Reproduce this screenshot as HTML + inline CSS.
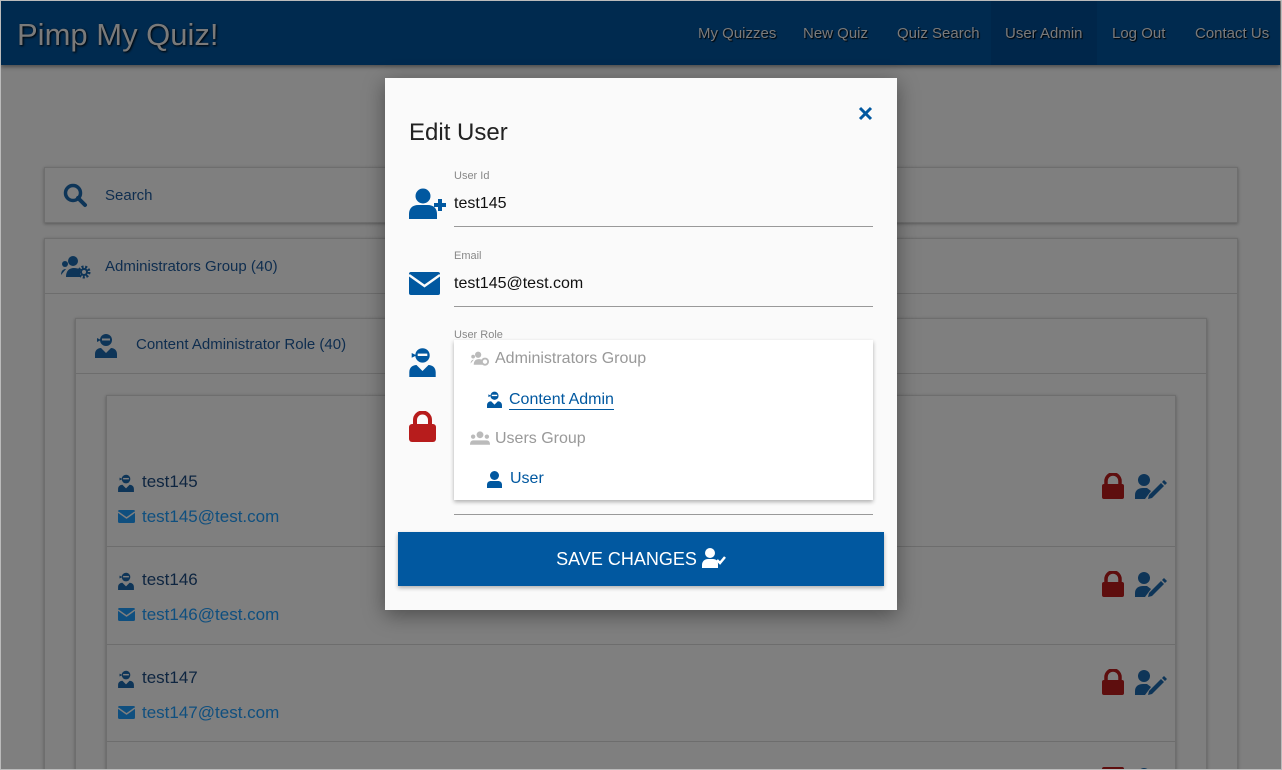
<!DOCTYPE html>
<html><head><meta charset="utf-8"><style>
*{box-sizing:border-box;margin:0;padding:0}
html,body{width:1282px;height:770px;overflow:hidden}
body{background:#7f7f7f;font-family:"Liberation Sans",sans-serif}
#w{position:absolute;left:0;top:0;width:1282px;height:770px;overflow:hidden;background:#7f7f7f}
#fr{position:absolute;left:0;top:0;width:1282px;height:770px;border:1px solid #bbb;pointer-events:none}
.hdr{position:absolute;left:1px;top:1px;width:1279px;height:64px;background:#002a4f;box-shadow:0 2px 4px rgba(0,0,0,.4)}
.logo{position:absolute;left:16px;top:16px;font-size:31px;color:#7a7a7a;text-shadow:1px 1px 2px #000}
.nav{position:absolute;top:24px;font-size:15px;color:#7a7a7a;text-shadow:1px 1px 1px #000}
.card{position:absolute;border:1px solid #6e6e6e;box-shadow:0 1px 3px rgba(0,0,0,.3);background:#7f7f7f}
.t{position:absolute;font-size:15px;color:#0e2d4f}
.sep{position:absolute;left:107px;width:1068px;height:1px;background:#6d6d6d}
.row{position:absolute;font-size:17px}
.modal{position:absolute;left:385px;top:78px;width:512px;height:532px;background:#fafafa;box-shadow:0 5px 20px rgba(0,0,0,.4)}
.m{position:absolute}
.lbl{font-size:11px;color:#888}
.line{height:1px;background:#999;width:419px;left:69px}
.dd{position:absolute;left:69px;top:262px;width:419px;height:160px;background:#fff;box-shadow:0 2px 4px rgba(0,0,0,.3);font-size:16px}
.btn{position:absolute;left:13px;top:454px;width:486px;height:54px;background:#0158a0;color:#fff;font-size:18px;text-align:center;line-height:54px;box-shadow:0 2px 4px rgba(0,0,0,.3)}
</style></head><body><div id="w">
<div class="hdr">
<div class="logo">Pimp My Quiz!</div>
<div style="position:absolute;left:990px;top:0;width:106px;height:64px;background:#00264a"></div>
<div class="nav" style="left:697px">My Quizzes</div>
<div class="nav" style="left:802px">New Quiz</div>
<div class="nav" style="left:896px">Quiz Search</div>
<div class="nav" style="left:1004px">User Admin</div>
<div class="nav" style="left:1111px">Log Out</div>
<div class="nav" style="left:1194px">Contact Us</div>
</div>

<div class="card" style="left:44px;top:167px;width:1194px;height:56px"></div>
<svg style="position:absolute;left:63px;top:183px" width="26" height="26" viewBox="0 0 26 26"><circle cx="10" cy="10" r="7.5" fill="none" stroke="#0e3558" stroke-width="3.5"/><path d="M15 15l7 7" stroke="#0e3558" stroke-width="4" stroke-linecap="round"/></svg>
<div class="t" style="left:105px;top:187px">Search</div>

<div class="card" style="left:44px;top:238px;width:1194px;height:540px"></div>
<div style="position:absolute;left:45px;top:293px;width:1192px;height:1px;background:#6d6d6d"></div>
<svg style="position:absolute;left:60px;top:255px" width="32" height="24" viewBox="0 0 32 24"><circle cx="5" cy="9" r="3" fill="#0e3558"/><circle cx="13" cy="6" r="5" fill="#0e3558"/><path d="M1 20c0-5 3-6 5-6M6 22c0-6 3-9 8-9s6 2 6 2v7z" fill="#0e3558"/><circle cx="24" cy="17" r="5" fill="none" stroke="#0e3558" stroke-width="3" stroke-dasharray="2 1.5"/><circle cx="24" cy="17" r="3" fill="none" stroke="#0e3558" stroke-width="2"/></svg>
<div class="t" style="left:105px;top:258px">Administrators Group (40)</div>

<div class="card" style="left:75px;top:318px;width:1132px;height:460px"></div>
<div style="position:absolute;left:76px;top:373px;width:1130px;height:1px;background:#6d6d6d"></div>
<svg style="position:absolute;left:95px;top:333px" width="22" height="25" viewBox="0 0 22 25"><circle cx="11" cy="7" r="6" fill="#0e3558"/><rect x="7" y="5.5" width="8" height="2" fill="#7f7f7f"/><path d="M2 5l4 2-4 2z" fill="#0e3558"/><path d="M0 25v-4c0-4 3-6 6-6l5 5 5-5c3 0 6 2 6 6v4z" fill="#0e3558"/></svg>
<div class="t" style="left:136px;top:336px">Content Administrator Role (40)</div>

<div class="card" style="left:106px;top:395px;width:1070px;height:383px"></div>
<div class="sep" style="top:546px"></div><div class="sep" style="top:644px"></div><div class="sep" style="top:741px"></div>

<svg style="position:absolute;left:118px;top:474px" width="16" height="18" viewBox="0 0 22 25"><circle cx="11" cy="7" r="6" fill="#0e3558"/><rect x="7" y="5.5" width="8" height="2" fill="#7f7f7f"/><path d="M2 5l4 2-4 2z" fill="#0e3558"/><path d="M0 25v-4c0-4 3-6 6-6l5 5 5-5c3 0 6 2 6 6v4z" fill="#0e3558"/></svg>
<div class="row" style="left:142px;top:472px;color:#0e2540">test145</div>
<svg style="position:absolute;left:118px;top:510px" width="17" height="13" viewBox="0 0 17 13"><rect width="17" height="13" rx="1.5" fill="#0f4f7f"/><path d="M0 2l8.5 6 8.5-6" fill="none" stroke="#7f7f7f" stroke-width="1.5"/></svg>
<div class="row" style="left:142px;top:507px;color:#0f4f7f">test145@test.com</div>

<svg style="position:absolute;left:118px;top:572px" width="16" height="18" viewBox="0 0 22 25"><circle cx="11" cy="7" r="6" fill="#0e3558"/><rect x="7" y="5.5" width="8" height="2" fill="#7f7f7f"/><path d="M2 5l4 2-4 2z" fill="#0e3558"/><path d="M0 25v-4c0-4 3-6 6-6l5 5 5-5c3 0 6 2 6 6v4z" fill="#0e3558"/></svg>
<div class="row" style="left:142px;top:570px;color:#0e2540">test146</div>
<svg style="position:absolute;left:118px;top:608px" width="17" height="13" viewBox="0 0 17 13"><rect width="17" height="13" rx="1.5" fill="#0f4f7f"/><path d="M0 2l8.5 6 8.5-6" fill="none" stroke="#7f7f7f" stroke-width="1.5"/></svg>
<div class="row" style="left:142px;top:605px;color:#0f4f7f">test146@test.com</div>

<svg style="position:absolute;left:118px;top:670px" width="16" height="18" viewBox="0 0 22 25"><circle cx="11" cy="7" r="6" fill="#0e3558"/><rect x="7" y="5.5" width="8" height="2" fill="#7f7f7f"/><path d="M2 5l4 2-4 2z" fill="#0e3558"/><path d="M0 25v-4c0-4 3-6 6-6l5 5 5-5c3 0 6 2 6 6v4z" fill="#0e3558"/></svg>
<div class="row" style="left:142px;top:668px;color:#0e2540">test147</div>
<svg style="position:absolute;left:118px;top:706px" width="17" height="13" viewBox="0 0 17 13"><rect width="17" height="13" rx="1.5" fill="#0f4f7f"/><path d="M0 2l8.5 6 8.5-6" fill="none" stroke="#7f7f7f" stroke-width="1.5"/></svg>
<div class="row" style="left:142px;top:703px;color:#0f4f7f">test147@test.com</div>

<svg style="position:absolute;left:1101px;top:473px" width="68" height="27" viewBox="0 0 68 27"><path d="M5 12V8a7 7 0 0 1 14 0v4" fill="none" stroke="#5e0e0e" stroke-width="3.5"/><rect x="1" y="11" width="22" height="15" rx="2" fill="#5e0e0e"/><circle cx="43" cy="7" r="6" fill="#0e3558"/><path d="M34 26v-4c0-5 4-7 8-7h4l4 3-6 8z" fill="#0e3558"/><path d="M47 26l1-4 12-12 3 3-12 12z" fill="#0e3558"/><path d="M61 9l2-2 3 3-2 2z" fill="#0e3558"/></svg>
<svg style="position:absolute;left:1101px;top:571px" width="68" height="27" viewBox="0 0 68 27"><path d="M5 12V8a7 7 0 0 1 14 0v4" fill="none" stroke="#5e0e0e" stroke-width="3.5"/><rect x="1" y="11" width="22" height="15" rx="2" fill="#5e0e0e"/><circle cx="43" cy="7" r="6" fill="#0e3558"/><path d="M34 26v-4c0-5 4-7 8-7h4l4 3-6 8z" fill="#0e3558"/><path d="M47 26l1-4 12-12 3 3-12 12z" fill="#0e3558"/><path d="M61 9l2-2 3 3-2 2z" fill="#0e3558"/></svg>
<svg style="position:absolute;left:1101px;top:669px" width="68" height="27" viewBox="0 0 68 27"><path d="M5 12V8a7 7 0 0 1 14 0v4" fill="none" stroke="#5e0e0e" stroke-width="3.5"/><rect x="1" y="11" width="22" height="15" rx="2" fill="#5e0e0e"/><circle cx="43" cy="7" r="6" fill="#0e3558"/><path d="M34 26v-4c0-5 4-7 8-7h4l4 3-6 8z" fill="#0e3558"/><path d="M47 26l1-4 12-12 3 3-12 12z" fill="#0e3558"/><path d="M61 9l2-2 3 3-2 2z" fill="#0e3558"/></svg>
<svg style="position:absolute;left:1101px;top:767px" width="68" height="27" viewBox="0 0 68 27"><rect x="1" y="0" width="22" height="15" rx="2" fill="#5e0e0e"/><circle cx="43" cy="7" r="6" fill="#0e3558"/></svg>

<div class="modal">
<div class="m" style="left:24px;top:41px;font-size:24px;color:#222">Edit User</div>
<svg class="m" style="left:473px;top:28px" width="15" height="15" viewBox="0 0 15 15"><path d="M2 2l11 11M13 2L2 13" stroke="#0158a0" stroke-width="3"/></svg>

<div class="m lbl" style="left:69px;top:92px">User Id</div>
<svg class="m" style="left:24px;top:110px" width="38" height="31" viewBox="0 0 38 31"><circle cx="14" cy="8" r="7.5" fill="#0158a0"/><path d="M0 31v-5c0-6 4-9 9-9h10c5 0 9 3 9 9v5z" fill="#0158a0"/><path d="M31 11v12M25 17h12" stroke="#0158a0" stroke-width="4"/></svg>
<div class="m" style="left:69px;top:117px;font-size:16px;color:#111">test145</div>
<div class="m line" style="top:148px"></div>

<div class="m lbl" style="left:69px;top:172px">Email</div>
<svg class="m" style="left:24px;top:194px" width="31" height="23" viewBox="0 0 31 23"><rect width="31" height="23" rx="2" fill="#0158a0"/><path d="M0 3l15.5 11L31 3" fill="none" stroke="#fafafa" stroke-width="2.5"/></svg>
<div class="m" style="left:69px;top:197px;font-size:16px;color:#111">test145@test.com</div>
<div class="m line" style="top:228px"></div>

<div class="m lbl" style="left:69px;top:251px">User Role</div>
<svg class="m" style="left:24px;top:269px" width="27" height="30" viewBox="0 0 22 25"><circle cx="11" cy="7" r="6" fill="#0158a0"/><rect x="7" y="5.5" width="8" height="2" fill="#fafafa"/><path d="M2 5l4 2-4 2z" fill="#0158a0"/><path d="M0 25v-4c0-4 3-6 6-6l5 5 5-5c3 0 6 2 6 6v4z" fill="#0158a0"/></svg>
<svg class="m" style="left:24px;top:333px" width="27" height="31" viewBox="0 0 27 31"><path d="M6 14V9a7.5 7.5 0 0 1 15 0v5" fill="none" stroke="#b71c1c" stroke-width="4"/><rect x="0" y="13" width="27" height="18" rx="3" fill="#b71c1c"/></svg>
<div class="m line" style="top:436px"></div>

<div class="dd">
<svg style="position:absolute;left:16px;top:11px" width="20" height="15" viewBox="0 0 32 24"><circle cx="5" cy="9" r="3" fill="#bbb"/><circle cx="13" cy="6" r="5" fill="#bbb"/><path d="M1 20c0-5 3-6 5-6M6 22c0-6 3-9 8-9s6 2 6 2v7z" fill="#bbb"/><circle cx="24" cy="17" r="5" fill="none" stroke="#bbb" stroke-width="3"/></svg>
<div style="position:absolute;left:41px;top:10px;color:#999">Administrators Group</div>
<svg style="position:absolute;left:33px;top:51px" width="15" height="17" viewBox="0 0 22 25"><circle cx="11" cy="7" r="6" fill="#0158a0"/><rect x="7" y="5.5" width="8" height="2" fill="#fff"/><path d="M2 5l4 2-4 2z" fill="#0158a0"/><path d="M0 25v-4c0-4 3-6 6-6l5 5 5-5c3 0 6 2 6 6v4z" fill="#0158a0"/></svg>
<div style="position:absolute;left:55px;top:50px;color:#0158a0;border-bottom:1px solid #0158a0;line-height:19px">Content Admin</div>
<svg style="position:absolute;left:16px;top:91px" width="20" height="15" viewBox="0 0 32 24"><circle cx="5" cy="9" r="3.5" fill="#bbb"/><circle cx="16" cy="6" r="5.5" fill="#bbb"/><circle cx="27" cy="9" r="3.5" fill="#bbb"/><path d="M0 22c0-5 2-7 6-7h20c4 0 6 2 6 7z" fill="#bbb"/></svg>
<div style="position:absolute;left:41px;top:90px;color:#999">Users Group</div>
<svg style="position:absolute;left:33px;top:131px" width="15" height="17" viewBox="0 0 15 17"><circle cx="7.5" cy="4.5" r="4.5" fill="#0158a0"/><path d="M0 17v-3c0-3 2-4 4-4h7c2 0 4 1 4 4v3z" fill="#0158a0"/></svg>
<div style="position:absolute;left:56px;top:130px;color:#0158a0">User</div>
</div>

<div class="btn">SAVE CHANGES <svg style="vertical-align:-3px" width="24" height="20" viewBox="0 0 24 20"><circle cx="8" cy="5" r="5" fill="#fff"/><path d="M0 20v-3c0-4 3-6 6-6h5c3 0 5 2 5 5v4z" fill="#fff"/><path d="M15 12l3 3 5-6" fill="none" stroke="#fff" stroke-width="2.5"/></svg></div>
</div>
<div id="fr"></div>
</div></body></html>
